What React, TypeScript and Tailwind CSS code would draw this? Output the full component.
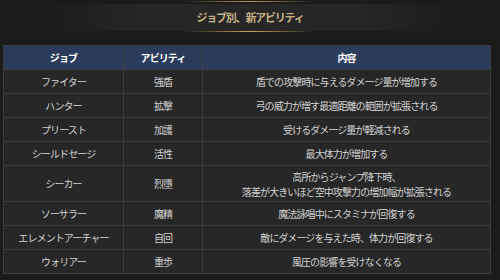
import React from "react";

const rows: [string, string, React.ReactNode][] = [
  ["ファイター", "強盾", "盾での攻撃時に与えるダメージ量が増加する"],
  ["ハンター", "拡撃", "弓の威力が増す最適距離の範囲が拡張される"],
  ["プリースト", "加護", "受けるダメージ量が軽減される"],
  ["シールドセージ", "活性", "最大体力が増加する"],
  [
    "シーカー",
    "烈墮",
    <>
      <span className="block">高所からジャンプ降下時、</span>
      <span className="block">落差が大きいほど空中攻撃力の増加幅が拡張される</span>
    </>,
  ],
  ["ソーサラー", "魔精", "魔法詠唱中にスタミナが回復する"],
  ["エレメントアーチャー", "自回", "敵にダメージを与えた時、体力が回復する"],
  ["ウォリアー", "重歩", "風圧の影響を受けなくなる"],
];

export default function App() {
  return (
    <div
      className="w-[500px] h-[280px] bg-[#1b1b1b] overflow-hidden"
      style={{ fontFamily: '"Noto Sans CJK JP", "Noto Sans", sans-serif' }}
    >
      <div className="relative h-[33px] pt-[1px]">
        <div className="mx-auto h-[1px] w-[130px] bg-gradient-to-r from-transparent via-[#b89a55] to-transparent" />
        <div className="mx-[40px] mt-[2px] h-[27px] bg-[linear-gradient(to_right,transparent,#262626_25%,#262626_75%,transparent)] flex items-center justify-center">
          <span className="text-[11px] font-bold text-[#c4b385] tracking-[-1.2px]">
            ジョブ別、新アビリティ
          </span>
        </div>
        <div className="mx-auto h-[1px] w-[130px] bg-gradient-to-r from-transparent via-[#c9a75e] to-transparent" />
      </div>
      <div className="px-[3px] pt-[12px]">
        <table className="w-[488px] border-collapse text-[10px] text-[#d2d2d2] table-fixed tracking-[-0.9px]">
          <colgroup>
            <col className="w-[120px]" />
            <col className="w-[79px]" />
            <col />
          </colgroup>
          <thead>
            <tr className="bg-[#2b3b5c] h-[24px]">
              <th className="border border-[#3d3d3d] font-bold text-white">ジョブ</th>
              <th className="border border-[#3d3d3d] font-bold text-white">アビリティ</th>
              <th className="border border-[#3d3d3d] font-bold text-white">内容</th>
            </tr>
          </thead>
          <tbody>
            {rows.map(([job, ab, desc], i) => (
              <tr key={i} className={`bg-[#272727] ${i === 4 ? "h-[36px]" : "h-[24px]"}`}>
                <td className="border border-[#3d3d3d] text-center leading-[15px]">{job}</td>
                <td className="border border-[#3d3d3d] text-center leading-[15px]">{ab}</td>
                <td className="border border-[#3d3d3d] text-center leading-[15px]">{desc}</td>
              </tr>
            ))}
          </tbody>
        </table>
      </div>
    </div>
  );
}
